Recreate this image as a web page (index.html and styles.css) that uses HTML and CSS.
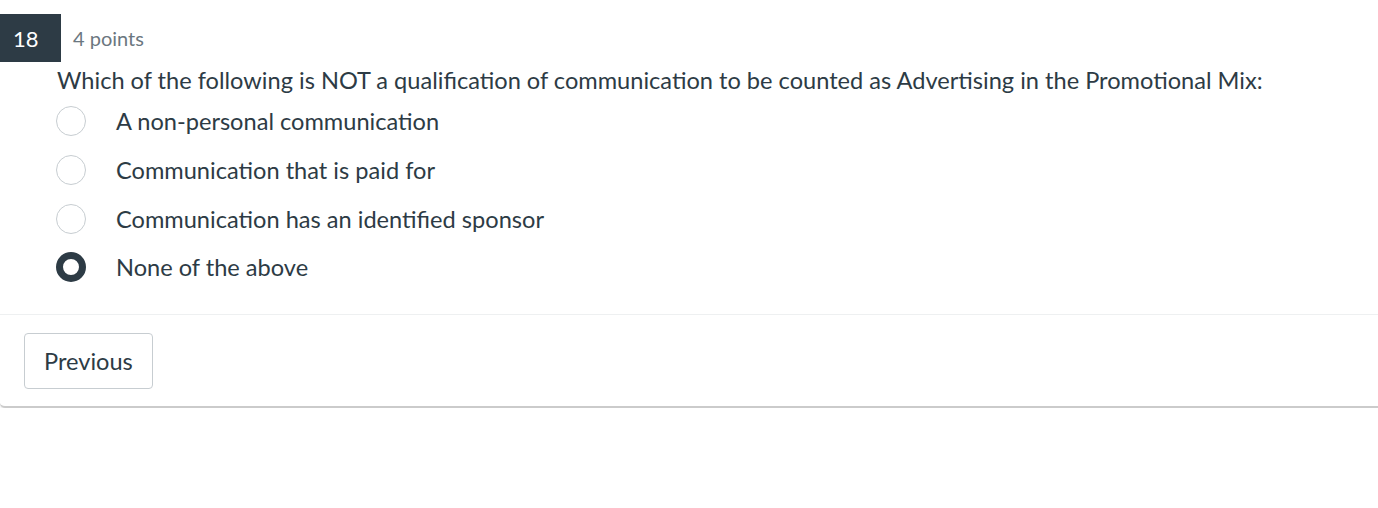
FILE: index.html
```html
<!DOCTYPE html>
<html>
<head>
<meta charset="utf-8">
<link rel="stylesheet" href="styles.css">
</head>
<body>
<div class="card">
  <div class="question">
    <div class="header">
      <div class="badge">18</div>
      <div class="points">4 points</div>
    </div>
    <div class="text">Which of the following is NOT a qualification of communication to be counted as Advertising in the Promotional Mix:</div>
    <div class="options">
      <div class="option"><span class="radio"></span><span class="label">A non-personal communication</span></div>
      <div class="option"><span class="radio"></span><span class="label">Communication that is paid for</span></div>
      <div class="option"><span class="radio"></span><span class="label">Communication has an identified sponsor</span></div>
      <div class="option"><span class="radio checked"></span><span class="label">None of the above</span></div>
    </div>
  </div>
  <div class="footer">
    <button class="btn">Previous</button>
  </div>
</div>
</body>
</html>
```
FILE: styles.css
```css
html, body {
  margin: 0;
  padding: 0;
  background: #fff;
}
html {
  overflow-x: hidden;
}
body {
  font-family: Lato, "Open Sans", sans-serif;
  color: #2d3b45;
}
.card {
  margin-right: -10px;
  background: #fff;
  border-bottom: 2px solid #cbcbcb;
  border-radius: 0 0 0 5px;
  box-shadow: 0 1px 2px rgba(0, 0, 0, 0.12);
}
.question {
  padding-top: 14px;
  padding-bottom: 22px;
}
.header {
  display: flex;
  align-items: center;
  height: 48px;
}
.badge {
  width: 61px;
  height: 48px;
  background: #2d3b45;
  color: #fff;
  font-size: 22px;
  display: flex;
  align-items: center;
  padding-left: 13px;
  box-sizing: border-box;
}
.points {
  margin-left: 12px;
  font-size: 20px;
  color: #6b7780;
}
.text {
  margin-top: 4px;
  padding-left: 57px;
  font-size: 23.6px;
  line-height: 28px;
}
.options {
  margin-top: 3px;
  padding-left: 56px;
}
.option {
  display: flex;
  align-items: center;
  height: 48.67px;
}
.radio {
  width: 30px;
  height: 30px;
  box-sizing: border-box;
  border: 1px solid #c7cdd1;
  border-radius: 50%;
  background: #fff;
  flex: none;
}
.radio.checked {
  border: 7px solid #2d3b45;
}
.label {
  margin-left: 30px;
  font-size: 23.6px;
}
.footer {
  border-top: 1px solid #eef0f1;
  padding: 18px 24px 17px;
}
.btn {
  display: block;
  height: 56px;
  padding: 0 19px;
  background: #fff;
  border: 1px solid #c7cdd1;
  border-radius: 4px;
  font-family: Lato, "Open Sans", sans-serif;
  font-size: 23.6px;
  color: #2d3b45;
}
```
